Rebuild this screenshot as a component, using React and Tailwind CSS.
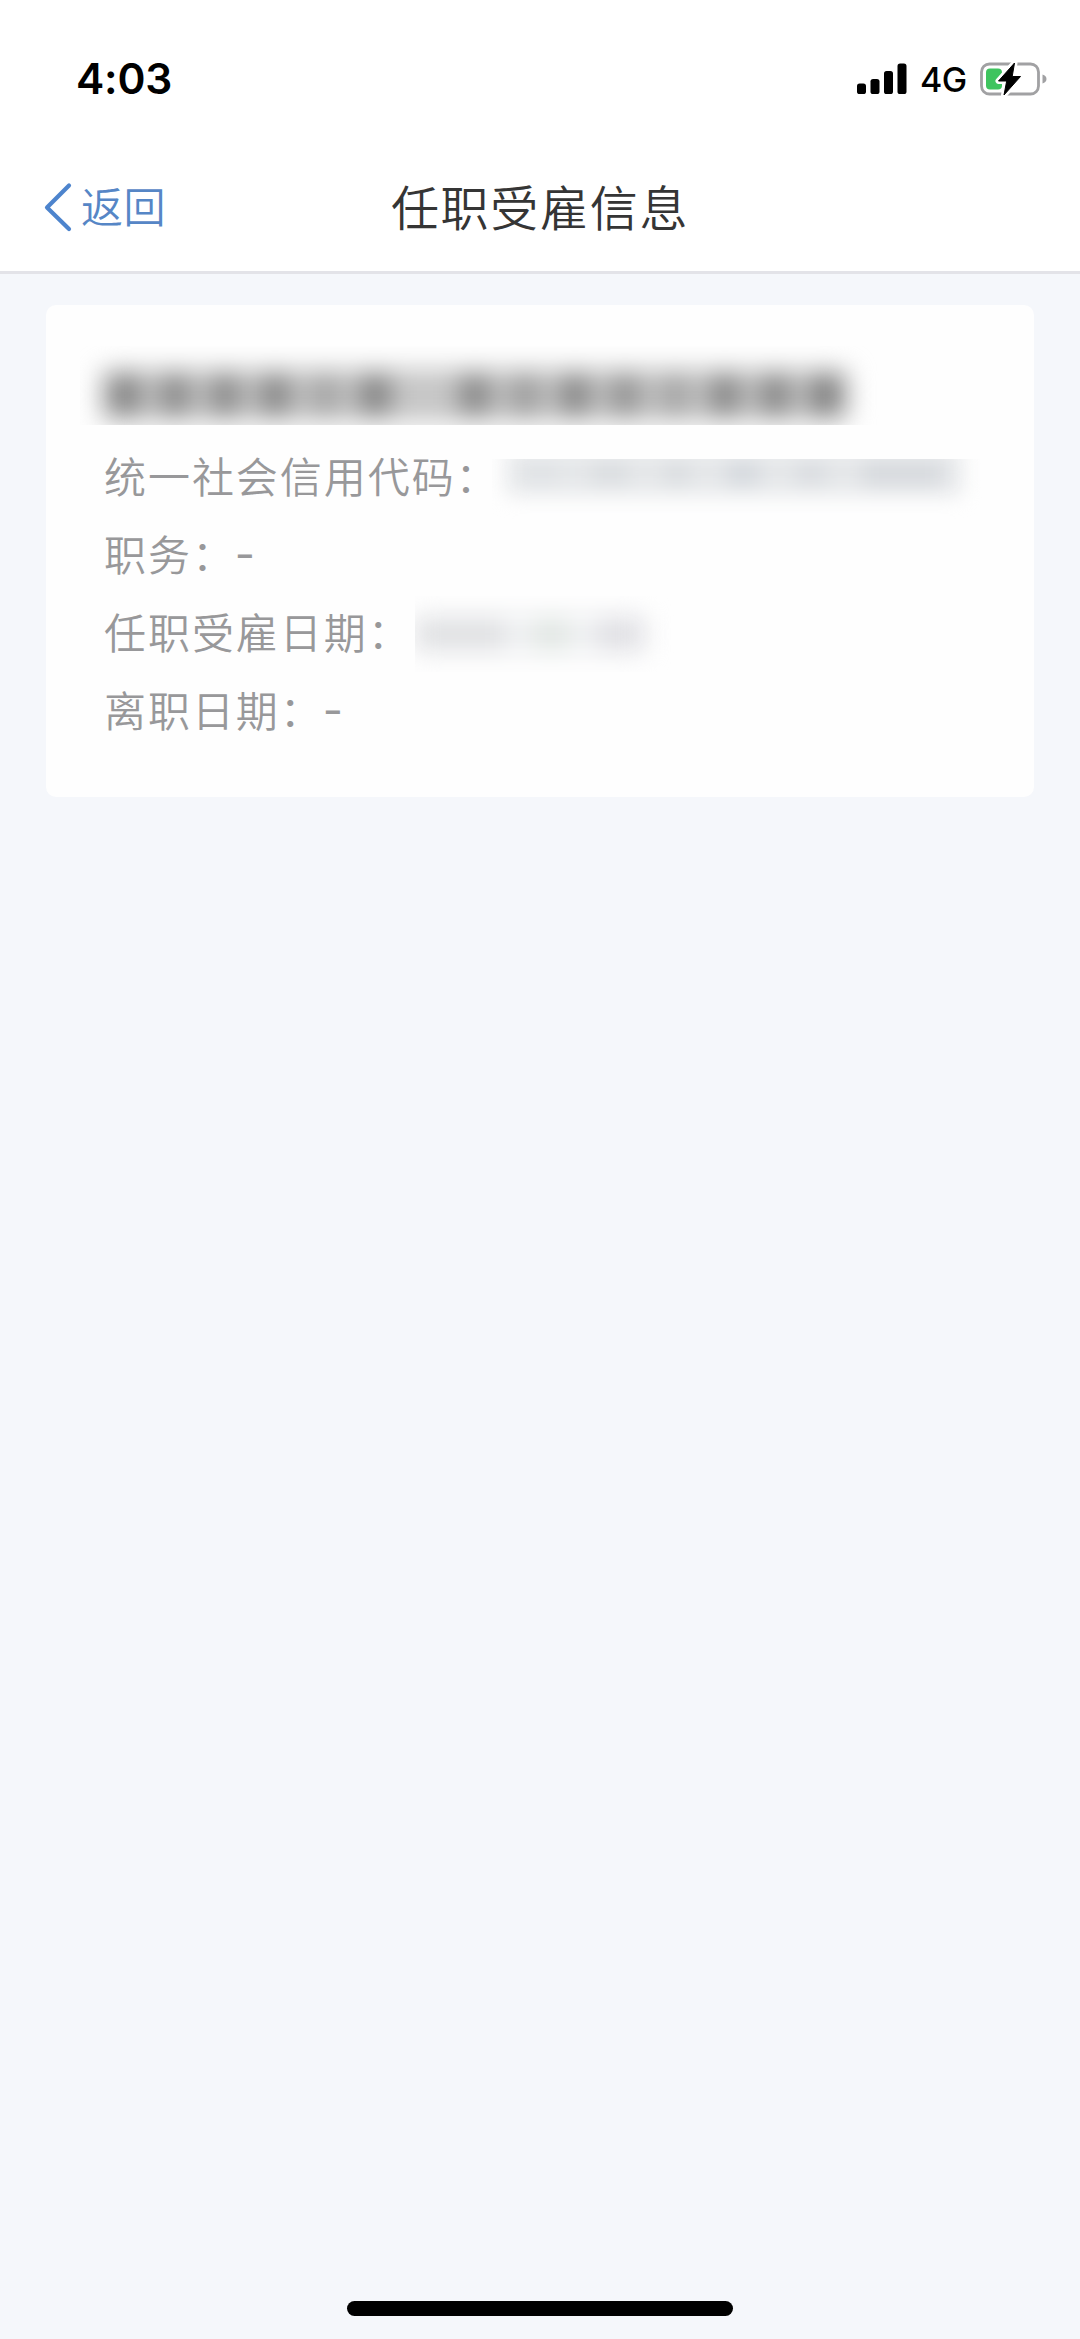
const NAME_INK = [
  'opacity-80', 'opacity-70', 'opacity-70', 'opacity-75', 'opacity-40',
  'opacity-80', 'opacity-0', 'opacity-75', 'opacity-50', 'opacity-75',
  'opacity-60', 'opacity-40', 'opacity-75', 'opacity-75', 'opacity-85',
];

function StatusBar() {
  return (
    <div className="flex h-[158px] items-start justify-between pl-[76px] pr-[32px] pt-[53px]">
      <span className='font-["Inter",sans-serif] text-[42.5px] font-semibold leading-[52px] tracking-[-0.2px] text-black'>
        4:03
      </span>
      <div className="flex h-[52px] items-center">
        <svg className="h-[32px] w-[50px]" viewBox="0 0 50 32">
          <rect x="0" y="20.5" width="9" height="10.5" rx="2.6" />
          <rect x="13.5" y="16" width="9" height="15" rx="2.6" />
          <rect x="27" y="8" width="9" height="23" rx="2.6" />
          <rect x="40.5" y="0.5" width="9" height="30.5" rx="2.6" />
        </svg>
        <span className='ml-[13px] mt-[2px] w-[47px] whitespace-nowrap font-["Inter",sans-serif] text-[34px] font-medium leading-[52px] tracking-[-0.5px] text-black'>
          4G
        </span>
        <svg className="ml-[12px] h-[36px] w-[69px]" viewBox="0 0 69 36" fill="none">
          <rect x="2.5" y="3" width="57" height="30" rx="8" stroke="#a1a1a3" strokeWidth="2.8" />
          <path d="M63.5 13.5v9c2.6-.8 4-2.5 4-4.5s-1.4-3.7-4-4.5Z" fill="#a1a1a3" />
          <rect x="7" y="7.5" width="16" height="21" rx="4" fill="#3fc45f" />
          <path
            d="M35.5 2 19.5 20h8.2L25 34 41.5 15.5H33.2L35.5 2Z"
            fill="#fff"
            stroke="#fff"
            strokeWidth="6"
            strokeLinejoin="round"
          />
          <path d="M35.5 2 19.5 20h8.2L25 34 41.5 15.5H33.2L35.5 2Z" fill="#000" stroke="#000" strokeLinejoin="round" />
        </svg>
      </div>
    </div>
  );
}

function NavBar() {
  return (
    <div className="grid h-[116px] grid-cols-3 border-b-[3px] border-[#e3e3e8] pb-[15px]">
      <div className="flex items-center pl-[44px] text-[#5686c6]">
        <svg className="h-[50px] w-[28px]" viewBox="0 0 28 50" fill="none">
          <path d="M25 3.5 3 25.5 25 47" stroke="#4d84cd" strokeWidth="4.2" strokeLinecap="round" strokeLinejoin="round" />
        </svg>
        <span className="-mt-[5px] ml-[9px] text-[42px] leading-[60px] tracking-[0.5px]">返回</span>
      </div>
      <div className="-mt-[5px] flex items-center justify-center whitespace-nowrap text-[48px] leading-[60px] tracking-[1.7px] text-[#353535]">
        任职受雇信息
      </div>
    </div>
  );
}

function Row({ label, children }) {
  return (
    <div className="flex h-[78px] items-center text-[42px] tracking-[1.95px] text-[#98989a]">
      <span className="-mt-[6px] whitespace-nowrap leading-[60px]">{label}：</span>
      {children}
    </div>
  );
}

function Dash() {
  return <span className='-mt-[4px] ml-[-1px] font-["Inter",sans-serif] text-[44px] font-normal leading-[60px]'>-</span>;
}

function MaskedName() {
  return (
    <div className="-ml-[24px] flex h-[79px] w-[800px] items-center overflow-hidden pl-[20px] pt-[18px]">
      <div className="flex h-[52px] items-center rounded-lg bg-[#c6c6c6] blur-[12px]">
        {NAME_INK.map((ink, i) => (
          <span key={i} className="flex w-[50px] justify-center">
            <i className={'h-[40px] w-[32px] rounded-lg bg-[#757575] ' + ink} />
          </span>
        ))}
      </div>
    </div>
  );
}

function MaskedCode() {
  return (
    <div className="-ml-[8px] mt-[26px] h-[65px] w-[490px] overflow-hidden pl-[14px]">
      <div className="-mt-[10px] flex h-[46px] w-[456px] items-center justify-between rounded bg-[#e6e8ea] px-[20px] pt-[4px] blur-[10px]">
        <i className="h-[20px] w-[30px] bg-[#dfe2e5]" />
        <i className="h-[22px] w-[36px] bg-[#dadde0]" />
        <i className="h-[22px] w-[26px] bg-[#dadde0]" />
        <i className="h-[24px] w-[34px] bg-[#d5d9de]" />
        <i className="h-[22px] w-[30px] bg-[#d9dce0]" />
        <i className="h-[26px] w-[80px] bg-[#d7dade]" />
      </div>
    </div>
  );
}

function MaskedDate() {
  return (
    <div className="ml-[3px] flex h-[76px] w-[260px] items-center overflow-hidden">
      <div className="flex h-[40px] w-[230px] items-center justify-between rounded bg-[#f2f3f5] blur-[12px]">
        <i className="h-[30px] w-[92px] bg-[#dfe0e2]" />
        <i className="h-[32px] w-[42px] bg-[#e2e7e4]" />
        <i className="h-[32px] w-[50px] bg-[#e0e0e4]" />
      </div>
    </div>
  );
}

export default function App() {
  return (
    <main className='flex h-[2339px] w-[1080px] flex-col overflow-hidden bg-[#f5f7fb] font-["Noto_Sans_CJK_SC",sans-serif] font-[350]'>
      <header className="bg-white">
        <StatusBar />
        <NavBar />
      </header>
      <section className="mx-[46px] mt-[31px] h-[492px] rounded-[10px] bg-[#fefefe] pl-[58px] pt-[41px]">
        <MaskedName />
        <div className="pt-[14px]">
          <Row label="统一社会信用代码">
            <MaskedCode />
          </Row>
          <Row label="职务">
            <Dash />
          </Row>
          <Row label="任职受雇日期">
            <MaskedDate />
          </Row>
          <Row label="离职日期">
            <Dash />
          </Row>
        </div>
      </section>
      <div className="mt-auto flex justify-center pb-[23px]">
        <div className="h-[15px] w-[386px] rounded-full bg-black" />
      </div>
    </main>
  );
}
